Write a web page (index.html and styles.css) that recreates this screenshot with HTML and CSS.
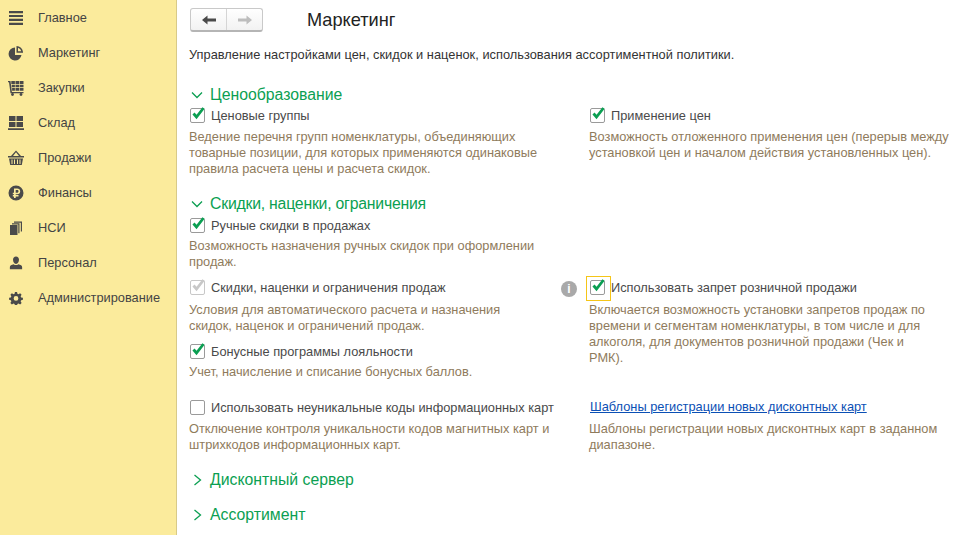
FILE: index.html
```html
<!DOCTYPE html>
<html lang="ru">
<head>
<meta charset="utf-8">
<title>Маркетинг</title>
<link rel="stylesheet" href="styles.css">
</head>
<body>
<div class="app">
  <nav class="sidebar">
    <a class="nav-item"><svg class="nav-icon" viewBox="0 0 16 16"><path d="M1 1h14v2.2H1zM1 4.9h14v2.2H1zM1 8.800h14V11H1zM1 12.700h14v2.200H1z"/></svg><span>Главное</span></a>
    <a class="nav-item"><svg class="nav-icon" viewBox="0 0 16 16"><path d="M7 2.500a6.500 6.500 0 1 0 6.500 7.500H7z"/><path d="M8.500 1a6.500 6.500 0 0 1 6.500 6v.8H8.500zM10 2.800v3.400h3.300A5 5 0 0 0 10 2.800z" fill-rule="evenodd"/></svg><span>Маркетинг</span></a>
    <a class="nav-item"><svg class="nav-icon" viewBox="0 0 16 16"><path d="M0 1h2.500l1.400 11h11.600v1.300H2.500L1 2.300H0z"/><path d="M3.300 1h3.600v3H3.300zM7.500 1H11v3H7.500zM11.600 1h3.900v3h-3.900zM3.700 4.700h3.200v2.600H3.700zM7.500 4.700H11v2.600H7.500zM11.600 4.700h3.900v2.600h-3.900zM4.100 8h2.800v2.800H4.100zM7.500 8H11v2.800H7.500zM11.600 8h3.900v2.800h-3.900z"/><circle cx="4.500" cy="14.500" r="1.400"/><circle cx="13" cy="14.500" r="1.400"/></svg><span>Закупки</span></a>
    <a class="nav-item"><svg class="nav-icon" viewBox="0 0 16 16"><path d="M1 1h6.500v5H1zM8.500 1H15v5H8.500zM1 7h6.500v5H1zM8.500 7H15v5H8.500zM0 13.300h16v1.700H0z"/></svg><span>Склад</span></a>
    <a class="nav-item"><svg class="nav-icon" viewBox="0 0 16 16"><path d="M8 .5l5 5.500h3v1.500H0V6h3zM8 2.300L5 6h6z" fill-rule="evenodd"/><path d="M1 8.500h14L13.800 15H2.200zM3.500 9.500v4.500h1V9.500zM6 9.500v4.500h1V9.500zM9 9.500v4.500h1V9.500zM11.500 9.500v4.500h1V9.500z" fill-rule="evenodd"/></svg><span>Продажи</span></a>
    <a class="nav-item"><svg class="nav-icon" viewBox="0 0 16 16"><path fill-rule="evenodd" d="M8 .5a7.500 7.500 0 1 1 0 15 7.500 7.500 0 0 1 0-15zM6 3.500v4.300H4.800v1.400H6v.9H4.800V11.500H6v1.500h1.700v-1.500h2.800v-1.400H7.700v-.9h1.500c1.900 0 3-1 3-2.900s-1.200-2.800-3-2.800zM7.700 5h1.400c.9 0 1.400.5 1.400 1.300 0 .9-.5 1.500-1.400 1.500H7.700z"/></svg><span>Финансы</span></a>
    <a class="nav-item"><svg class="nav-icon" viewBox="0 0 16 16"><path d="M2 5h7.500v10H2z"/><path d="M4 3.300h7.500v10h-1.200V4.500H4zM6 1.500h8v10h-1.200V2.700H6z"/></svg><span>НСИ</span></a>
    <a class="nav-item"><svg class="nav-icon nav-icon-small" viewBox="0 0 16 16"><path d="M8 .5c2.200 0 3.400 1.500 3.400 3.700S10.200 9 8 9 4.600 6.400 4.600 4.200 5.800.5 8 .5z"/><path d="M5.300 9.300c.8.700 1.700 1 2.700 1s1.900-.3 2.700-1c2.500.4 4.300 1.500 4.300 3.200v2.500H1v-2.500c0-1.700 1.800-2.800 4.300-3.200z"/></svg><span>Персонал</span></a>
    <a class="nav-item"><svg class="nav-icon nav-icon-small" viewBox="0 0 16 16"><path fill-rule="evenodd" d="M6.800 1h2.400l.4 2 1.300.6 1.800-1.100 1.700 1.700-1.100 1.800.6 1.300 2 .4v2.400l-2 .4-.6 1.300 1.100 1.800-1.700 1.700-1.800-1.100-1.300.6-.4 2H6.800l-.4-2-1.300-.6-1.800 1.100-1.700-1.700 1.100-1.800-.6-1.300-2-.4V7.700l2-.4.600-1.300-1.100-1.800 1.700-1.700 1.800 1.100 1.300-.6zM8 5.800a2.700 2.700 0 1 0 0 5.400 2.700 2.700 0 0 0 0-5.400z"/></svg><span>Администрирование</span></a>
  </nav>
  <main class="content">
    <header class="topbar">
      <div class="history">
        <button class="history-btn"><svg class="arrow" viewBox="0 0 14 10"><path d="M0 5l5.500-4.500V3.500H14v3H5.500v3z"/></svg></button>
        <button class="history-btn"><svg class="arrow arrow-off" viewBox="0 0 14 10"><path d="M14 5L8.500.5V3.500H0v3h8.500v3z"/></svg></button>
      </div>
      <h1 class="title">Маркетинг</h1>
    </header>
    <p class="intro">Управление настройками цен, скидок и наценок, использования ассортиментной политики.</p>

    <h2 class="section first"><svg class="chev" viewBox="0 0 12 12"><path d="M1 3.500l5 5 5-5"/></svg>Ценообразование</h2>
    <div class="row">
      <div class="field">
        <label class="check"><span class="box"><svg viewBox="0 0 16 16" class="tick"><path d="M3.500 7.500l3 3.500L13.500 2"/></svg></span>Ценовые группы</label>
        <p class="hint">Ведение перечня групп номенклатуры, объединяющих<br>товарные позиции, для которых применяются одинаковые<br>правила расчета цены и расчета скидок.</p>
      </div>
      <div class="field">
        <label class="check"><span class="box"><svg viewBox="0 0 16 16" class="tick"><path d="M3.500 7.500l3 3.500L13.500 2"/></svg></span>Применение цен</label>
        <p class="hint">Возможность отложенного применения цен (перерыв между<br>установкой цен и началом действия установленных цен).</p>
      </div>
    </div>

    <h2 class="section second"><svg class="chev" viewBox="0 0 12 12"><path d="M1 3.500l5 5 5-5"/></svg>Скидки, наценки, ограничения</h2>
    <div class="row row-first">
      <div class="field">
        <label class="check"><span class="box"><svg viewBox="0 0 16 16" class="tick"><path d="M3.500 7.500l3 3.500L13.500 2"/></svg></span>Ручные скидки в продажах</label>
        <p class="hint hint-tight">Возможность назначения ручных скидок при оформлении<br>продаж.</p>
      </div>
    </div>
    <div class="row row-mid">
      <div class="field">
        <label class="check"><span class="box box-off"><svg viewBox="0 0 16 16" class="tick tick-off"><path d="M3.500 7.500l3 3.500L13.500 2"/></svg></span>Скидки, наценки и ограничения продаж</label>
        <p class="hint hint-wide">Условия для автоматического расчета и назначения<br>скидок, наценок и ограничений продаж.</p>
        <label class="check check-next"><span class="box"><svg viewBox="0 0 16 16" class="tick"><path d="M3.500 7.500l3 3.500L13.500 2"/></svg></span>Бонусные программы лояльности</label>
        <p class="hint hint-tight">Учет, начисление и списание бонусных баллов.</p>
        <span class="info">i</span>
      </div>
      <div class="field">
        <label class="check"><span class="box box-focus"><svg viewBox="0 0 16 16" class="tick"><path d="M3.500 7.500l3 3.500L13.500 2"/></svg></span>Использовать запрет розничной продажи</label>
        <p class="hint hint-wide">Включается возможность установки запретов продаж по<br>времени и сегментам номенклатуры, в том числе и для<br>алкоголя, для документов розничной продажи (Чек и<br>РМК).</p>
      </div>
    </div>
    <div class="row row-last">
      <div class="field">
        <label class="check"><span class="box"></span>Использовать неуникальные коды информационных карт</label>
        <p class="hint">Отключение контроля уникальности кодов магнитных карт и<br>штрихкодов информационных карт.</p>
      </div>
      <div class="field">
        <a class="link">Шаблоны регистрации новых дисконтных карт</a>
        <p class="hint">Шаблоны регистрации новых дисконтных карт в заданном<br>диапазоне.</p>
      </div>
    </div>

    <h2 class="section third"><svg class="chev" viewBox="0 0 12 12"><path d="M3.500 1l6 5-6 5"/></svg>Дисконтный сервер</h2>
    <h2 class="section fourth"><svg class="chev" viewBox="0 0 12 12"><path d="M3.500 1l6 5-6 5"/></svg>Ассортимент</h2>
  </main>
</div>
</body>
</html>
```
FILE: styles.css
```css
* { box-sizing: border-box; }
html, body { margin: 0; height: 100%; background: #fff; overflow: hidden; }
body { font-family: "Liberation Sans", Arial, sans-serif; font-size: 12.800px; color: #4b4b4b; }
.app { display: flex; height: 535px; }

.sidebar { width: 177px; flex: none; background: #fbeb9c; border-right: 1px solid #d8ca88; }
.nav-item { display: flex; align-items: center; height: 35px; color: #444; }
.nav-icon { width: 16px; height: 16px; margin-left: 8px; margin-right: 14px; fill: #4a4a4a; flex: none; }
.nav-icon-small { width: 14px; height: 14px; margin-left: 9px; margin-right: 15px; }

.content { flex: 1; padding: 8px 0 0 12px; min-width: 0; }
.topbar { display: flex; align-items: center; height: 24px; }
.history { display: flex; width: 73px; height: 24px; margin-left: 1px; border: 1px solid #c9c9c9; border-bottom: 2px solid #b5b5b5; border-radius: 3px; background: linear-gradient(#fff, #f2f2f2); }
.history-btn { flex: 1; padding: 0; border: 0; background: none; display: flex; align-items: center; justify-content: center; }
.history-btn + .history-btn { border-left: 1px solid #d5d5d5; }
.arrow { width: 14px; height: 10px; fill: #4a4a4a; }
.arrow-off { fill: #bdbdbd; }
.title { margin: 0 0 0 44px; font-size: 18.200px; font-weight: 400; color: #222; }

.intro { margin: 15px 0 0; line-height: 16px; color: #333; letter-spacing: 0.020px; }

.section { display: flex; align-items: center; margin: 0; height: 20px; font-size: 15.800px; font-weight: 400; color: #0b9f52; }
.chev { width: 12px; height: 12px; margin: 0 7px 0 2px; fill: none; stroke: #0b9f52; stroke-width: 1.300; flex: none; }
.section.first { margin-top: 22px; }
.section.second { margin-top: 17px; letter-spacing: -0.220px; }
.section.third { margin-top: 17px; }
.section.fourth { margin-top: 15px; }

.row { display: grid; grid-template-columns: 400px 1fr; }
.row-first { margin-top: 1px; }
.row-mid { margin-top: 7px; }
.row-last { margin-top: 17px; }
.field { position: relative; }
.check { display: flex; align-items: center; height: 20px; color: #4a4a4a; }
.check-next { margin-top: 7px; }
.box { position: relative; display: flex; align-items: center; justify-content: center; width: 15px; height: 15px; margin: 0 6px 0 1px; border: 1px solid #9a9a9a; border-radius: 2px; background: #fff; flex: none; }
.box-off { border-color: #c8c8c8; }
.box-focus::after { content: ""; position: absolute; left: -5px; top: -5px; width: 23px; height: 23px; border: 1px solid #f5c518; }
.tick { width: 16px; height: 16px; margin-top: -2px; overflow: visible; fill: none; stroke: #0b9f52; stroke-width: 2.800; flex: none; }
.tick-off { stroke: #c8c8c8; }
.hint { margin: 4px 0 0; line-height: 16px; color: #8f7b5c; white-space: nowrap; }
.hint-tight { margin-top: 3px; }
.hint-wide { margin-top: 5px; }
.link { display: block; height: 20px; line-height: 20px; margin-left: 1px; color: #0b50b5; text-decoration: underline; }
.info { position: absolute; left: 372px; top: 4px; width: 16px; height: 16px; border-radius: 50%; background: #a9a9a9; color: #fff; font: 700 12px/16px "Liberation Sans", sans-serif; text-align: center; }
```
